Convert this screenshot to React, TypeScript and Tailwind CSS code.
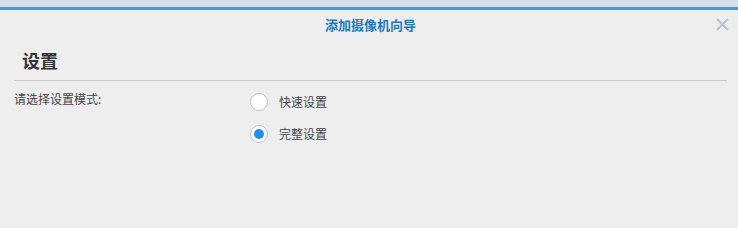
const FONT = { fontFamily: '"Microsoft YaHei", "Noto Sans CJK SC", "Noto Sans", sans-serif' }

interface RadioProps {
	label: string
	checked: boolean
	onSelect: () => void
}

const Radio = ({ label, checked, onSelect }: RadioProps) => (
	<button
		type="button"
		onClick={onSelect}
		className="flex h-[32px] items-center gap-[11px] text-left"
	>
		<span className="flex size-[18px] items-center justify-center rounded-full border border-[#c4c4c4] bg-white">
			{checked && <span className="size-[10px] rounded-full bg-[#1e90f5]" />}
		</span>
		<span className="text-[12px] text-[#444]">{label}</span>
	</button>
)

export default function App() {
	const [mode, setMode] = React.useState('full')

	return (
		<div className="h-[228px] w-[738px] overflow-hidden bg-[#eeeeee]" style={FONT}>
			<div className="h-[7px] bg-[#d6e0eb]" />
			<div className="h-[3px] bg-[#3a9bef]" />
			<div className="relative flex h-[30px] items-center justify-center">
				<span className="pl-[3px] text-[13px] font-bold text-[#1b78c0]">添加摄像机向导</span>
				<button type="button" className="absolute right-[9px] top-[8px] text-[#b6c2cc]">
					<svg width="13" height="13" viewBox="0 0 13 13" fill="none" stroke="currentColor" strokeWidth="2">
						<path d="M1 1 L12 12 M12 1 L1 12" />
					</svg>
				</button>
			</div>
			<div className="px-[14px] pr-[11px]">
				<div className="flex h-[41px] items-center border-b border-[#cccccc] pl-[8px]">
					<h1 className="text-[18px] font-bold text-[#333]">设置</h1>
				</div>
				<div className="flex">
					<div className="w-[236px] pt-[9px] text-[12px] leading-[18px] text-[#444]">请选择设置模式:</div>
					<div className="flex flex-col pt-[5px]">
						<Radio label="快速设置" checked={mode === 'quick'} onSelect={() => setMode('quick')} />
						<Radio label="完整设置" checked={mode === 'full'} onSelect={() => setMode('full')} />
					</div>
				</div>
			</div>
		</div>
	)
}

import React from 'react'
